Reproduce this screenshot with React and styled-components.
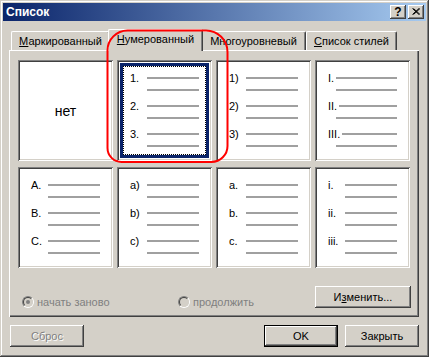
import React from "react";
import styled, { createGlobalStyle } from "styled-components";

const GlobalStyle = createGlobalStyle`
  html, body {
    margin: 0;
    padding: 0;
    background: #d4d0c8;
  }
  body {
    font-family: "Liberation Sans", Arial, sans-serif;
    font-size: 11px;
  }
`;

const raisedShadow = `
  box-shadow: inset -1px -1px #404040, inset 1px 1px #fff,
    inset -2px -2px #808080, inset 2px 2px #d4d0c8;
`;

const Window = styled.div`
  position: relative;
  box-sizing: border-box;
  width: 429px;
  height: 357px;
  padding: 3px;
  background: #d4d0c8;
  box-shadow: inset -1px -1px #404040, inset 1px 1px #d4d0c8,
    inset -2px -2px #808080, inset 2px 2px #fff;
  display: flex;
  flex-direction: column;
`;

const TitleBar = styled.div`
  height: 18px;
  display: flex;
  align-items: center;
  padding: 0 2px 0 3px;
  background: linear-gradient(to right, #0a246a, #a6caf0);
`;

const Title = styled.span`
  flex: 1;
  color: #fff;
  font-weight: bold;
  font-size: 12px;
`;

const CaptionButton = styled.div`
  box-sizing: border-box;
  width: 16px;
  height: 14px;
  margin-left: 2px;
  background: #d4d0c8;
  ${raisedShadow}
  display: flex;
  align-items: center;
  justify-content: center;
  font-weight: bold;
  font-size: 12px;
  color: #000;
  padding-bottom: 1px;
`;

const Body = styled.div`
  padding: 8px 0 0 6px;
`;

const TabRow = styled.div`
  display: flex;
  align-items: flex-end;
  height: 21px;
  padding-left: 2px;
`;

const Tab = styled.div`
  box-sizing: border-box;
  position: relative;
  z-index: ${(p) => (p.$active ? 2 : 1)};
  width: ${(p) => p.$w}px;
  height: ${(p) => (p.$active ? 22 : 19)}px;
  margin: 0 ${(p) => (p.$active ? -2 : 0)}px ${(p) => (p.$active ? -1 : 0)}px;
  padding-bottom: ${(p) => (p.$active ? 3 : 1)}px;
  background: #d4d0c8;
  border-top: 1px solid #fff;
  border-left: 1px solid #fff;
  border-right: 1px solid #404040;
  border-radius: 2px 2px 0 0;
  box-shadow: inset -1px 0 #808080;
  display: flex;
  align-items: center;
  justify-content: center;
  color: #000;
  white-space: nowrap;
`;

const Panel = styled.div`
  box-sizing: border-box;
  width: 410px;
  height: 267px;
  padding: 10px 8px 9px 9px;
  box-shadow: inset 1px 1px #fff, inset -1px -1px #404040,
    inset -2px -2px #808080;
  display: flex;
  flex-direction: column;
`;

const Grid = styled.div`
  display: grid;
  grid-template-columns: repeat(4, 95px);
  grid-auto-rows: 101px;
  column-gap: 4px;
  row-gap: 6px;
`;

const Cell = styled.div`
  position: relative;
  box-sizing: border-box;
  background: #fff;
  padding: 12px 0 0 13px;
  box-shadow: inset 1px 1px #808080, inset -1px -1px #fff,
    inset 2px 2px #404040, inset -2px -2px #d4d0c8;
  display: flex;
  flex-direction: column;
  gap: 4px;

  ${(p) =>
    p.$selected &&
    `
    &::before {
      content: "";
      position: absolute;
      inset: 3px;
      border: 3px solid #0a246a;
    }
    &::after {
      content: "";
      position: absolute;
      inset: 6px;
      border: 1px dotted #000;
    }
  `}
`;

const NoneCell = styled(Cell)`
  padding: 0;
  align-items: center;
  justify-content: center;
  font-size: 14px;
  color: #000;
`;

const Item = styled.div`
  display: flex;
  flex-direction: column;
`;

const Row = styled.div`
  display: flex;
  align-items: center;
  height: 12px;
  width: 69px;
  padding-left: ${(p) => p.$indent || 0}px;
  box-sizing: border-box;
`;

const Label = styled.span`
  min-width: ${(p) => p.$w}px;
  padding-right: 2px;
  box-sizing: border-box;
  color: #000;
  font-size: 11px;
  line-height: 12px;
`;

const Line = styled.span`
  flex: 1;
  height: 2px;
  background: #a0a0a0;
`;

const BottomRow = styled.div`
  display: flex;
  align-items: flex-end;
  margin-top: 18px;
  height: 22px;
`;

const RadioItem = styled.div`
  display: flex;
  align-items: center;
  gap: 3px;
  width: ${(p) => p.$w}px;
  margin-left: ${(p) => p.$ml || 0}px;
  color: #808080;
  font-size: 11px;
`;

const RadioOuter = styled.span`
  box-sizing: border-box;
  width: 12px;
  height: 12px;
  border-radius: 50%;
  border: 1px solid;
  border-color: #808080 #fff #fff #808080;
  display: flex;
`;

const RadioInner = styled.span`
  box-sizing: border-box;
  width: 10px;
  height: 10px;
  border-radius: 50%;
  border: 1px solid;
  border-color: #404040 #d4d0c8 #d4d0c8 #404040;
  background: #d4d0c8;
  display: flex;
  align-items: center;
  justify-content: center;
`;

const RadioDot = styled.span`
  width: 4px;
  height: 4px;
  border-radius: 50%;
  background: #808080;
`;

const Button = styled.div`
  box-sizing: border-box;
  width: ${(p) => p.$w}px;
  height: 22px;
  margin-left: ${(p) => p.$ml || "0"};
  background: #d4d0c8;
  display: flex;
  align-items: center;
  justify-content: center;
  font-size: 11px;
  color: ${(p) => (p.$disabled ? "#808080" : "#000")};
  text-shadow: ${(p) => (p.$disabled ? "1px 1px #fff" : "none")};
  ${(p) =>
    p.$default
      ? `border: 1px solid #000;
         box-shadow: inset -1px -1px #404040, inset 1px 1px #fff,
           inset -2px -2px #808080;`
      : raisedShadow}
`;

const Footer = styled.div`
  display: flex;
  width: 410px;
  margin-top: 8px;
  padding-left: 1px;
  box-sizing: border-box;
`;

const Annotation = styled.svg`
  position: absolute;
  top: 0;
  left: 0;
  pointer-events: none;
  z-index: 5;
`;

const lists = [
  { labels: ["1.", "2.", "3."], w: 17, indent: 17, selected: true },
  { labels: ["1)", "2)", "3)"], w: 17, indent: 17 },
  { labels: ["I.", "II.", "III."], w: 0, indent: 8 },
  { labels: ["A.", "B.", "C."], w: 17, indent: 17 },
  { labels: ["a)", "b)", "c)"], w: 17, indent: 17 },
  { labels: ["a.", "b.", "c."], w: 17, indent: 17 },
  { labels: ["i.", "ii.", "iii."], w: 17, indent: 17 },
];

const ListPreview = ({ labels, w, indent, selected }) => (
  <Cell $selected={selected}>
    {labels.map((l) => (
      <Item key={l}>
        <Row>
          <Label $w={w}>{l}</Label>
          <Line />
        </Row>
        <Row $indent={indent}>
          <Line />
        </Row>
      </Item>
    ))}
  </Cell>
);

const App = () => {
  return (
    <>
      <GlobalStyle />
      <Window>
        <TitleBar>
          <Title>Список</Title>
          <CaptionButton>?</CaptionButton>
          <CaptionButton>
            <svg width="8" height="7" viewBox="0 0 8 7">
              <path d="M0.5 0.5 L7 6.5 M1.5 0.5 L8 6.5 M7 0.5 L0.5 6.5 M8 0.5 L1.5 6.5" stroke="#000" strokeWidth="1" />
            </svg>
          </CaptionButton>
        </TitleBar>
        <Body>
          <TabRow>
            <Tab $w={99}>
              <span><u>М</u>аркированный</span>
            </Tab>
            <Tab $w={95} $active>
              <span><u>Н</u>умерованный</span>
            </Tab>
            <Tab $w={105}>
              <span>Многоуровневый</span>
            </Tab>
            <Tab $w={91}>
              <span><u>С</u>писок стилей</span>
            </Tab>
          </TabRow>
          <Panel>
            <Grid>
              <NoneCell>нет</NoneCell>
              {lists.map((l, i) => (
                <ListPreview key={i} {...l} />
              ))}
            </Grid>
            <BottomRow>
              <RadioItem $w={156} $ml={4}>
                <RadioOuter>
                  <RadioInner>
                    <RadioDot />
                  </RadioInner>
                </RadioOuter>
                начать заново
              </RadioItem>
              <RadioItem $w={120}>
                <RadioOuter>
                  <RadioInner />
                </RadioOuter>
                продолжить
              </RadioItem>
              <Button $w={96} $ml="auto">
                <span>И<u>з</u>менить...</span>
              </Button>
            </BottomRow>
          </Panel>
          <Footer>
            <Button $w={74} $disabled>Сброс</Button>
            <Button $w={74} $ml="auto" $default>OK</Button>
            <Button $w={74} $ml="7px">Закрыть</Button>
          </Footer>
        </Body>
        <Annotation width="429" height="357" viewBox="0 0 429 357">
          <path
            d="M107.5 50.5 A20 20 0 0 1 127.5 30.5 L206 30.5 A21.5 21.5 0 0 1 227.5 52 L227.5 146 A16 16 0 0 1 211.5 162 L121.5 162 A14 14 0 0 1 107.5 148 Z"
            fill="none"
            stroke="#ff0000"
            strokeWidth="2"
          />
        </Annotation>
      </Window>
    </>
  );
};

export default App;
